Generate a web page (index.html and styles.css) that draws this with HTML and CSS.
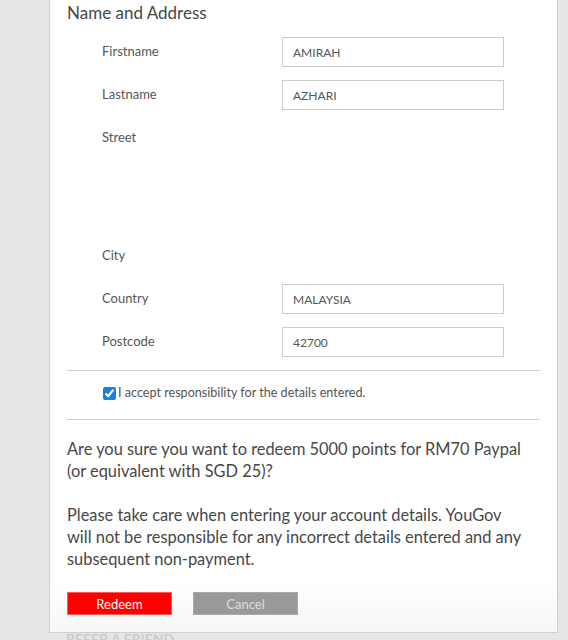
FILE: index.html
```html
<!DOCTYPE html>
<html lang="en">
<head>
<meta charset="utf-8">
<title>Redeem</title>
<link rel="stylesheet" href="styles.css">
</head>
<body>
<div class="page">
  <div class="panel">
    <h2 class="heading">Name and Address</h2>
    <div class="rows">
      <div class="row">
        <span class="label">Firstname</span>
        <input class="field" type="text" value="AMIRAH">
      </div>
      <div class="row">
        <span class="label">Lastname</span>
        <input class="field" type="text" value="AZHARI">
      </div>
      <div class="row row-street">
        <span class="label">Street</span>
      </div>
      <div class="row">
        <span class="label">City</span>
      </div>
      <div class="row">
        <span class="label">Country</span>
        <input class="field" type="text" value="MALAYSIA">
      </div>
      <div class="row">
        <span class="label">Postcode</span>
        <input class="field" type="text" value="42700">
      </div>
    </div>
    <hr class="rule">
    <label class="accept"><input class="check" type="checkbox" checked>I accept responsibility for the details entered.</label>
    <hr class="rule">
    <p class="text">Are you sure you want to redeem 5000 points for RM70 Paypal<br>(or equivalent with SGD 25)?</p>
    <p class="text">Please take care when entering your account details. YouGov<br>will not be responsible for any incorrect details entered and any<br>subsequent non-payment.</p>
    <div class="buttons">
      <button class="btn btn-redeem" type="button">Redeem</button>
      <button class="btn btn-cancel" type="button">Cancel</button>
    </div>
  </div>
  <div class="refer">REFER A FRIEND</div>
</div>
</body>
</html>
```
FILE: styles.css
```css
html, body {
  margin: 0;
  padding: 0;
  background: #e6e6e6;
  font-family: "Lato", "Open Sans", sans-serif;
  color: #444;
}

.page {
  width: 509px;
  margin-left: 49px;
  height: 640px;
  overflow: hidden;
}

.panel {
  background: linear-gradient(to bottom, #ffffff 0, #ffffff 580px, #f7f7f7 632px);
  border: 1px solid #cfcfcf;
  border-top: none;
  padding: 0 17px 17px 17px;
  position: relative;
  z-index: 1;
}

.heading {
  margin: 0;
  padding-top: 2px;
  font-size: 17px;
  line-height: 22px;
  font-weight: 400;
  color: #474747;
}

.rows {
  padding: 13px 0 0 35px;
}

.row {
  display: flex;
  align-items: flex-start;
  height: 30px;
  margin-bottom: 13px;
}

.row-street {
  height: 105px;
}

.label {
  width: 180px;
  font-size: 13px;
  line-height: 28px;
  color: #555;
}

.field {
  box-sizing: border-box;
  width: 222px;
  height: 30px;
  margin: 0;
  padding: 0 10px;
  border: 1px solid #cccccc;
  background: #fff;
  font-family: inherit;
  font-size: 12px;
  color: #555;
  outline: none;
}

.rule {
  margin: 0;
  border: none;
  border-top: 1px solid #cfcfcf;
}

.accept {
  display: flex;
  align-items: center;
  padding: 14px 0 18px 35px;
  font-size: 12.6px;
  line-height: 16px;
  color: #555;
}

.check {
  width: 13px;
  height: 13px;
  margin: 0 2px 0 1px;
  accent-color: #1a7ee6;
}

.text {
  margin: 18px 0 0 0;
  font-size: 16.4px;
  line-height: 22px;
  color: #474747;
}

.text + .text {
  margin-top: 22px;
}

.buttons {
  display: flex;
  gap: 21px;
  margin-top: 22px;
}

.btn {
  width: 105px;
  height: 23px;
  padding: 0;
  font-family: inherit;
  font-size: 13px;
  cursor: pointer;
}

.btn-redeem {
  background: #ff0000;
  border: 1px solid #ff5a5a;
  color: #ffffff;
}

.btn-cancel {
  background: #999999;
  border: 1px solid #aaaaaa;
  color: #dddddd;
}

.refer {
  margin-top: -2px;
  padding-left: 17px;
  font-size: 14px;
  font-weight: 700;
  color: #cccccc;
  line-height: 16px;
}
```
